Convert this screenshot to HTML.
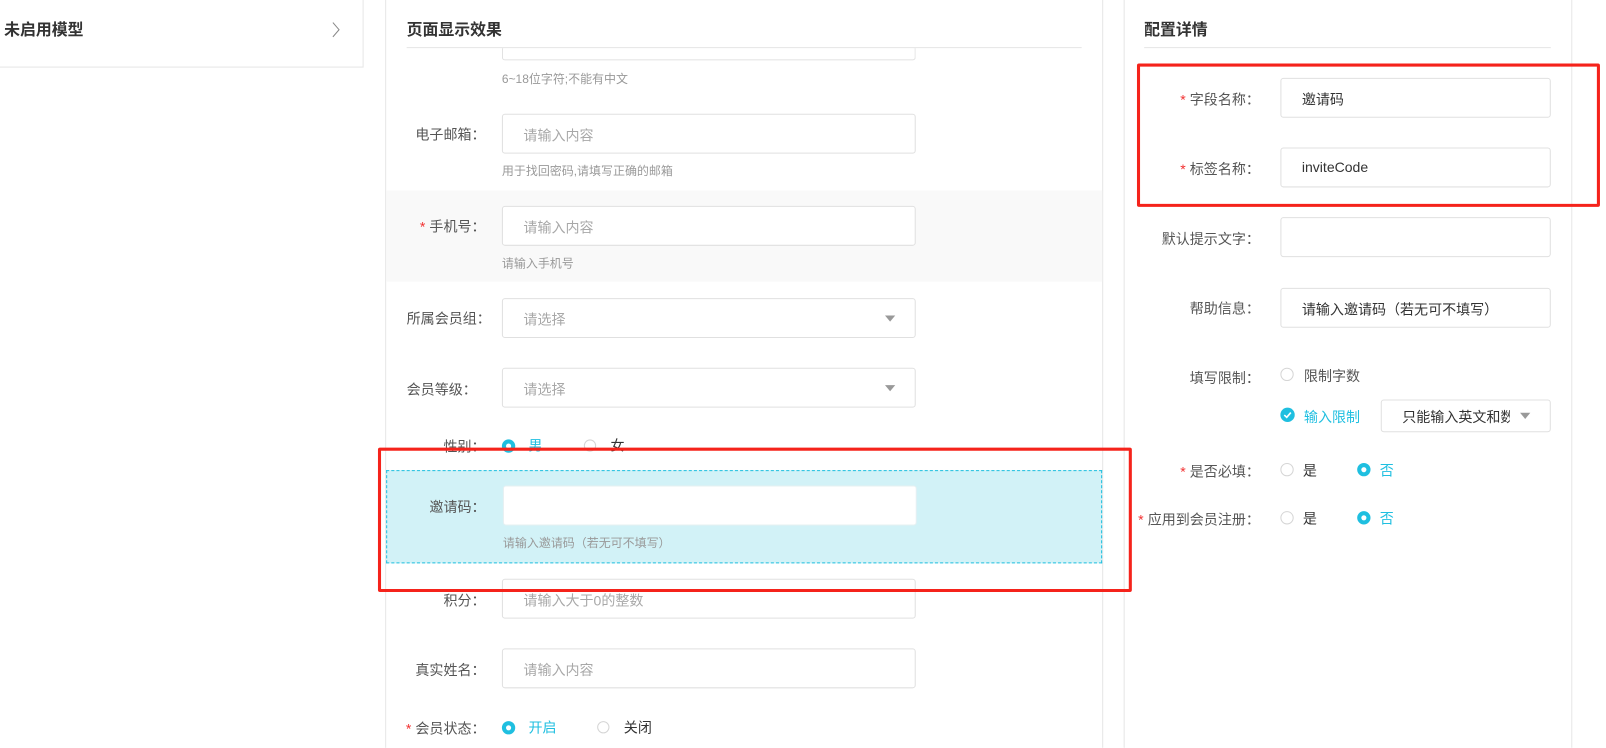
<!DOCTYPE html>
<html><head><meta charset="utf-8">
<style>
html,body{margin:0;padding:0;background:#fff;overflow:hidden;width:1606px;height:748px}
#w{position:absolute;left:0;top:0;width:1568px;height:730px;transform:scale(1.0243);transform-origin:0 0;font-family:"Liberation Sans","Noto Sans CJK SC",sans-serif;font-size:13.7px;color:#555}
.a{position:absolute;white-space:nowrap}
.t{margin-top:-3px}
.lab{position:absolute;text-align:right;white-space:nowrap;color:#555;margin-top:-2px}
.inp{position:absolute;box-sizing:border-box;border:1px solid #e0e0e0;border-radius:3px;background:#fff;padding-left:20px;color:#a8a8a8;display:flex;align-items:center}
.help{position:absolute;font-size:11.7px;color:#999;white-space:nowrap}
.star{color:#f23030;margin-right:4px}
.r{position:absolute;width:12px;height:12px;border:1px solid #d5d5d5;border-radius:50%;box-sizing:border-box;background:#fff;margin-top:3px}
.rc{position:absolute;width:13px;height:13px;border-radius:50%;background:#1fbfe0;margin-top:3px}
.rc:after{content:"";position:absolute;left:4px;top:4px;width:5px;height:5px;border-radius:50%;background:#fff}
.cy{color:#1fbfe0}
.tri{position:absolute;width:0;height:0;border-left:5px solid transparent;border-right:5px solid transparent;border-top:6px solid #999}
</style></head><body><div id="w">
<div class="a" style="left:-1px;top:-1px;width:356px;height:67px;border:1px solid #e6e6e6;box-sizing:border-box"></div>
<div class="a" style="left:4px;top:17px;font-size:15.5px;color:#333;font-weight:bold">未启用模型</div>
<svg class="a" style="left:323px;top:21px" width="10" height="16"><path d="M2 1 L8 8 L2 15" fill="none" stroke="#888" stroke-width="1"/></svg>

<div class="a" style="left:376px;top:0;width:701px;height:730px;border-left:1px solid #e6e6e6;border-right:1px solid #e6e6e6;box-sizing:border-box"></div>
<div class="a" style="left:397px;top:17px;font-size:15.5px;color:#333;font-weight:bold">页面显示效果</div>
<div class="a" style="left:397px;top:46px;width:659px;height:1px;background:#e6e6e6"></div>
<div class="a" style="left:490px;top:47px;width:404px;height:12px;border:1px solid #e0e0e0;border-top:none;border-radius:0 0 3px 3px;box-sizing:border-box"></div>
<div class="help" style="left:490px;top:68px">6~18位字符;不能有中文</div>

<div class="lab" style="left:380px;width:94px;top:122px">电子邮箱：</div>
<div class="inp" style="left:490px;top:111px;width:404px;height:39px">请输入内容</div>
<div class="help" style="left:490px;top:158px">用于找回密码,请填写正确的邮箱</div>

<div class="a" style="left:377px;top:186px;width:699px;height:89px;background:#f9f9f9"></div>
<div class="lab" style="left:380px;width:94px;top:212px"><span class="star">*</span>手机号：</div>
<div class="inp" style="left:490px;top:201px;width:404px;height:39px">请输入内容</div>
<div class="help" style="left:490px;top:248px">请输入手机号</div>

<div class="lab" style="left:397px;top:302px">所属会员组：</div>
<div class="inp" style="left:490px;top:291px;width:404px;height:39px">请选择</div>
<div class="tri" style="left:864px;top:308px"></div>

<div class="lab" style="left:397px;top:371px">会员等级：</div>
<div class="inp" style="left:490px;top:359px;width:404px;height:39px">请选择</div>
<div class="tri" style="left:864px;top:376px"></div>

<div class="lab" style="left:380px;width:94px;top:427px">性别：</div>
<div class="rc" style="left:490px;top:426px"></div><div class="a cy t" style="left:516px;top:427px">男</div>
<div class="r" style="left:570px;top:426px"></div><div class="a t" style="left:596px;top:427px;color:#333">女</div>

<div class="a" style="left:377px;top:459px;width:699px;height:91px;background:#d2f2f7;border:1px dashed #1fbfe0;box-sizing:border-box"></div>
<div class="lab" style="left:380px;width:94px;top:486px">邀请码：</div>
<div class="inp" style="left:491px;top:474px;width:404px;height:39px;border-color:#e6f0f2"></div>
<div class="help" style="left:491px;top:521px">请输入邀请码（若无可不填写）</div>

<div class="lab" style="left:380px;width:94px;top:577px">积分：</div>
<div class="inp" style="left:490px;top:565px;width:404px;height:39px">请输入大于0的整数</div>

<div class="lab" style="left:380px;width:94px;top:645px">真实姓名：</div>
<div class="inp" style="left:490px;top:633px;width:404px;height:39px">请输入内容</div>

<div class="lab" style="left:380px;width:94px;top:702px"><span class="star">*</span>会员状态：</div>
<div class="rc" style="left:490px;top:701px"></div><div class="a cy t" style="left:516px;top:702px">开启</div>
<div class="r" style="left:583px;top:701px"></div><div class="a t" style="left:609px;top:702px;color:#333">关闭</div>

<div class="a" style="left:1097px;top:0;width:438px;height:730px;border-left:1px solid #e6e6e6;border-right:1px solid #e6e6e6;box-sizing:border-box"></div>
<div class="a" style="left:1117px;top:17px;font-size:15.5px;color:#333;font-weight:bold">配置详情</div>
<div class="a" style="left:1117px;top:46px;width:397px;height:1px;background:#e6e6e6"></div>

<div class="lab" style="left:1100px;width:130px;top:88px"><span class="star">*</span>字段名称：</div>
<div class="inp" style="left:1250px;top:76px;width:264px;height:39px;color:#333">邀请码</div>
<div class="lab" style="left:1100px;width:130px;top:156px"><span class="star">*</span>标签名称：</div>
<div class="inp" style="left:1250px;top:144px;width:264px;height:39px;color:#333">inviteCode</div>
<div class="lab" style="left:1100px;width:130px;top:224px">默认提示文字：</div>
<div class="inp" style="left:1250px;top:212px;width:264px;height:39px"></div>
<div class="lab" style="left:1100px;width:130px;top:292px">帮助信息：</div>
<div class="inp" style="left:1250px;top:281px;width:264px;height:39px;color:#333">请输入邀请码（若无可不填写）</div>

<div class="lab" style="left:1100px;width:130px;top:360px">填写限制：</div>
<div class="r" style="left:1250px;top:356px;width:13px;height:13px"></div><div class="a t" style="left:1273px;top:359px">限制字数</div>
<div class="a" style="left:1250px;top:398px;width:14px;height:14px;border-radius:50%;background:#1fbfe0"></div>
<svg class="a" style="left:1250px;top:398px" width="14" height="14"><path d="M3.8 7.2 L6.2 9.4 L10.2 4.8" fill="none" stroke="#fff" stroke-width="1.6"/></svg>
<div class="a cy t" style="left:1273px;top:399px">输入限制</div>
<div class="inp" style="left:1348px;top:390px;width:166px;height:32px;color:#333;padding-left:20px;overflow:hidden">只能输入英文和数:</div>
<div class="a" style="left:1474px;top:392px;width:36px;height:28px;background:#fff"></div>
<div class="tri" style="left:1484px;top:403px"></div>

<div class="lab" style="left:1100px;width:130px;top:451px"><span class="star">*</span>是否必填：</div>
<div class="r" style="left:1250px;top:449px;width:13px;height:13px"></div><div class="a t" style="left:1272px;top:451px;color:#333">是</div>
<div class="rc" style="left:1325px;top:449px"></div><div class="a cy t" style="left:1347px;top:451px">否</div>

<div class="lab" style="left:1100px;width:130px;top:498px"><span class="star">*</span>应用到会员注册：</div>
<div class="r" style="left:1250px;top:496px;width:13px;height:13px"></div><div class="a t" style="left:1272px;top:498px;color:#333">是</div>
<div class="rc" style="left:1325px;top:496px"></div><div class="a cy t" style="left:1347px;top:498px">否</div>

<div class="a" style="left:369px;top:437px;width:736px;height:141px;border:3px solid #f5231b;box-sizing:border-box;border-radius:2px"></div>
<div class="a" style="left:1110px;top:62px;width:452px;height:140px;border:3px solid #f5231b;box-sizing:border-box;border-radius:2px"></div>
</div></body></html>
